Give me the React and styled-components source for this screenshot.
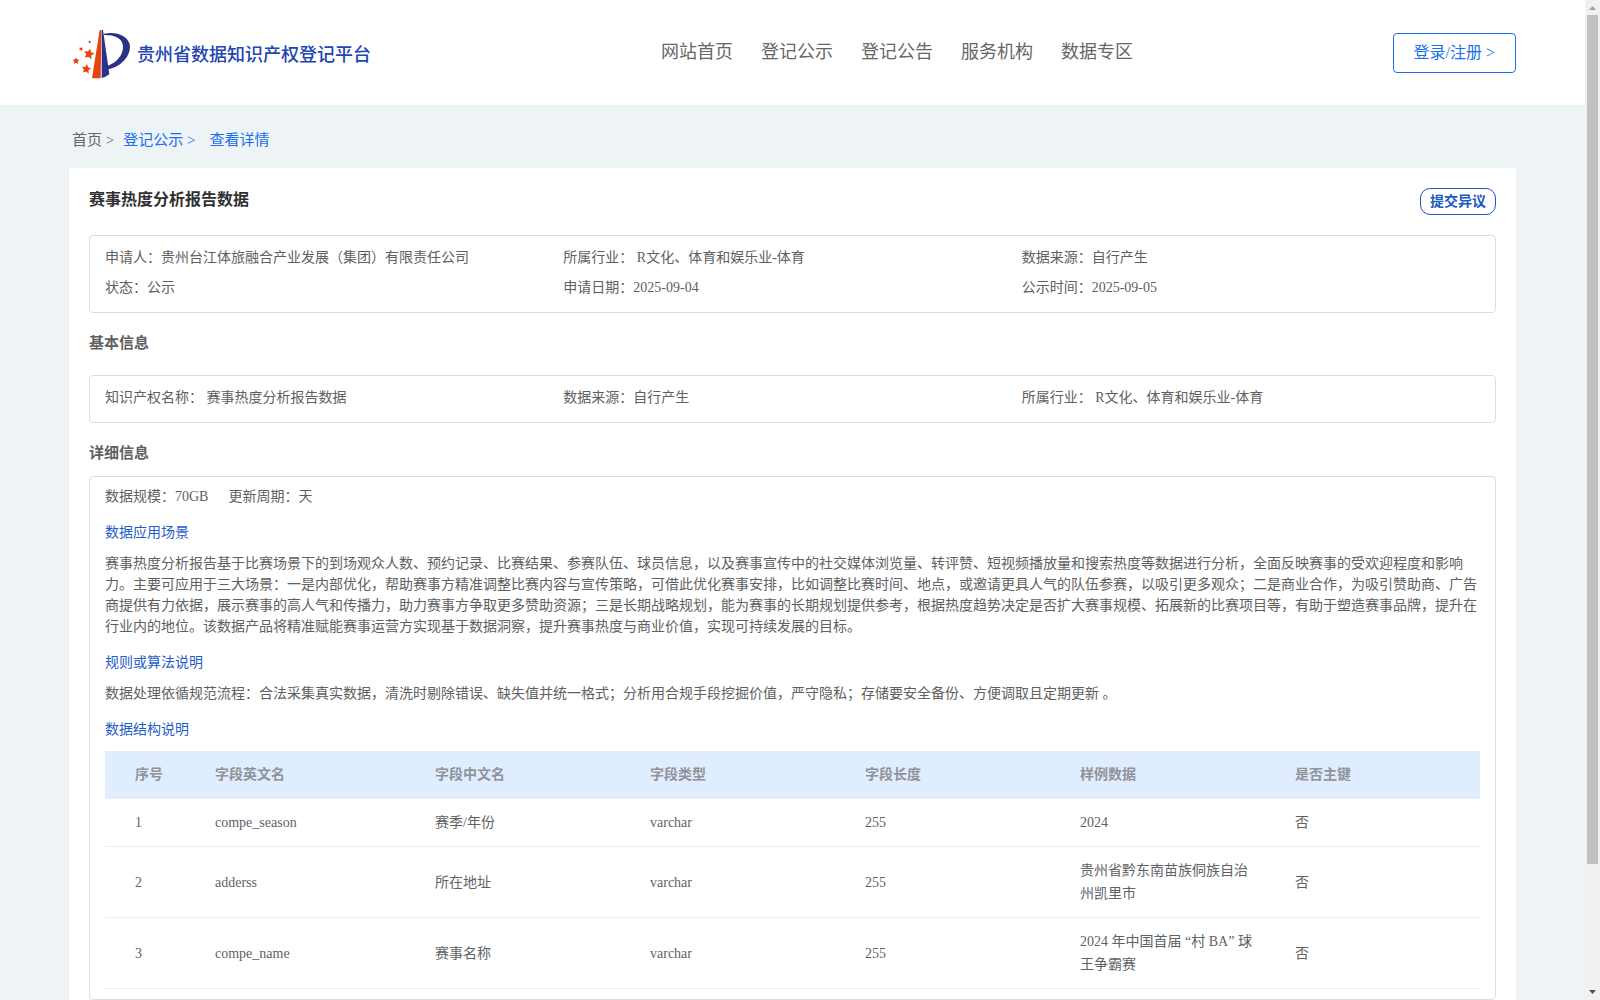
import React from "react";
import styled, { createGlobalStyle } from "styled-components";

const navs = ["网站首页", "登记公示", "登记公告", "服务机构", "数据专区"];

const summary = [
  ["申请人：", "贵州台江体旅融合产业发展（集团）有限责任公司"],
  ["所属行业：", " R文化、体育和娱乐业-体育"],
  ["数据来源：", "自行产生"],
  ["状态：", "公示"],
  ["申请日期：", "2025-09-04"],
  ["公示时间：", "2025-09-05"],
];

const basic = [
  ["知识产权名称：", " 赛事热度分析报告数据"],
  ["数据来源：", "自行产生"],
  ["所属行业：", " R文化、体育和娱乐业-体育"],
];

const columns = ["序号", "字段英文名", "字段中文名", "字段类型", "字段长度", "样例数据", "是否主键"];

const rows = [
  ["1", "compe_season", "赛季/年份", "varchar", "255", "2024", "否"],
  ["2", "adderss", "所在地址", "varchar", "255", "贵州省黔东南苗族侗族自治州凯里市", "否"],
  ["3", "compe_name", "赛事名称", "varchar", "255", "2024 年中国首届 “村 BA” 球王争霸赛", "否"],
];

const Logo = () => {
  return (
    <LogoSvg viewBox="15 12 180 156">
      <g fill="#e8430f">
        <path d="M101 21 L106 21 L104 166 L78 166 Z" />
        <Star x={69} y={93} r={17} turn={12} />
        <Star x={30} y={114} r={11} turn={0} />
        <Star x={61} y={138} r={15} turn={8} />
        <Star x={45} y={78} r={7} turn={20} />
        <Star x={71} y={57} r={5} turn={0} />
      </g>
      <g fill="#2a3188">
        <path d="M107 21 L111 21 L130 154 Q120 162 107 165 Z" />
        <path d="M114 32 C150 24 190 38 192 70 C192 104 162 132 127 139 L124 129 C152 118 171 97 171 71 C171 44 142 35 114 36 Z" />
      </g>
    </LogoSvg>
  );
};

const Star = ({ x, y, r, turn }) => {
  const points = [];
  for (let i = 0; i < 10; i++) {
    const len = i % 2 ? r * 0.48 : r;
    const a = ((i * 36 - 90 + turn) * Math.PI) / 180;
    points.push(`${x + len * Math.cos(a)},${y + len * Math.sin(a)}`);
  }
  return <polygon points={points.join(" ")} />;
};

const InfoGrid = ({ items }) => {
  return (
    <Grid>
      {items.map(([label, value], i) => (
        <Item key={i}>
          {label}
          {value}
        </Item>
      ))}
    </Grid>
  );
};

const App = () => {
  return (
    <>
      <GlobalStyle />
      <Window>
        <Page>
          <Header>
            <Brand>
              <Logo />
              <BrandName>贵州省数据知识产权登记平台</BrandName>
            </Brand>
            <Nav>
              {navs.map((n) => (
                <NavItem key={n}>{n}</NavItem>
              ))}
            </Nav>
            <LoginBtn>登录/注册 &gt;</LoginBtn>
          </Header>
          <Crumbs>
            <Crumb>首页 &gt;</Crumb>
            <Crumb $active $gap="9px">登记公示 &gt;</Crumb>
            <Crumb $active $gap="14px">查看详情</Crumb>
          </Crumbs>
          <Card>
            <TitleRow>
              <Title>赛事热度分析报告数据</Title>
              <ObjectBtn>提交异议</ObjectBtn>
            </TitleRow>
            <Box $height="78px" $top="7px">
              <InfoGrid items={summary} />
            </Box>
            <SubTitle $height="62px">基本信息</SubTitle>
            <Box $height="48px" $top="7px">
              <InfoGrid items={basic} />
            </Box>
            <SubTitle $height="53px">详细信息</SubTitle>
            <Box $height="524px" $top="9px">
              <Scale>
                <span>数据规模：70GB</span>
                <span>更新周期：天</span>
              </Scale>
              <BlueTitle>数据应用场景</BlueTitle>
              <Text>
                赛事热度分析报告基于比赛场景下的到场观众人数、预约记录、比赛结果、参赛队伍、球员信息，以及赛事宣传中的社交媒体浏览量、转评赞、短视频播放量和搜索热度等数据进行分析，全面反映赛事的受欢迎程度和影响力。主要可应用于三大场景：一是内部优化，帮助赛事方精准调整比赛内容与宣传策略，可借此优化赛事安排，比如调整比赛时间、地点，或邀请更具人气的队伍参赛，以吸引更多观众；二是商业合作，为吸引赞助商、广告商提供有力依据，展示赛事的高人气和传播力，助力赛事方争取更多赞助资源；三是长期战略规划，能为赛事的长期规划提供参考，根据热度趋势决定是否扩大赛事规模、拓展新的比赛项目等，有助于塑造赛事品牌，提升在行业内的地位。该数据产品将精准赋能赛事运营方实现基于数据洞察，提升赛事热度与商业价值，实现可持续发展的目标。
              </Text>
              <BlueTitle $top="16px">规则或算法说明</BlueTitle>
              <Text>
                数据处理依循规范流程：合法采集真实数据，清洗时剔除错误、缺失值并统一格式；分析用合规手段挖掘价值，严守隐私；存储要安全备份、方便调取且定期更新 。
              </Text>
              <BlueTitle $top="16px">数据结构说明</BlueTitle>
              <Table>
                <HeadRow>
                  {columns.map((c) => (
                    <Cell key={c}>{c}</Cell>
                  ))}
                </HeadRow>
                {rows.map((row) => (
                  <Row key={row[0]}>
                    {row.map((v, i) => (
                      <Cell key={i}>{v}</Cell>
                    ))}
                  </Row>
                ))}
              </Table>
            </Box>
          </Card>
        </Page>
        <ScrollBar>
          <Arrow viewBox="0 0 15 15" fill="#a3a3a3">
            <path d="M4 10 L11 10 L7.5 6 Z" />
          </Arrow>
          <Thumb />
          <Arrow viewBox="0 0 15 15" fill="#505050">
            <path d="M4 5 L11 5 L7.5 9 Z" />
          </Arrow>
        </ScrollBar>
      </Window>
    </>
  );
};

const GlobalStyle = createGlobalStyle`
  * {
    box-sizing: border-box;
  }
  body {
    margin: 0;
    overflow: hidden;
    font-family: "Liberation Serif", "Noto Sans CJK SC", serif;
    font-size: 14px;
    color: #606060;
  }
`;

const Window = styled.div`
  display: flex;
  width: 1600px;
  height: 1000px;
  overflow: hidden;
`;

const Page = styled.div`
  width: 1585px;
  height: 1000px;
  overflow: hidden;
  background-color: #eef3f6;
`;

const Header = styled.div`
  display: flex;
  justify-content: space-between;
  align-items: center;
  height: 105px;
  padding: 0 69px 0 71px;
  background-color: white;
`;

const Brand = styled.div`
  display: flex;
  align-items: center;
  width: 590px;
`;

const LogoSvg = styled.svg`
  width: 60px;
  height: 52px;
`;

const BrandName = styled.div`
  margin-left: 6px;
  padding-top: 4px;
  font-size: 18px;
  line-height: 24px;
  font-weight: 500;
  color: #2244b4;
`;

const Nav = styled.div`
  display: flex;
  flex: 1;
  gap: 28px;
`;

const NavItem = styled.div`
  font-size: 18px;
  line-height: 24px;
  padding-bottom: 2px;
  color: #666;
`;

const LoginBtn = styled.div`
  height: 40px;
  padding: 0 20px;
  border: 1px solid #1a6ff0;
  border-radius: 4px;
  font-size: 16px;
  line-height: 38px;
  color: #1a6ff0;
`;

const Crumbs = styled.div`
  display: flex;
  align-items: center;
  height: 63px;
  padding: 7px 0 0 72px;
`;

const Crumb = styled.div`
  margin-left: ${(props) => props.$gap || 0};
  font-size: 15px;
  line-height: 20px;
  color: ${(props) => (props.$active ? "#1a6ff0" : "#666")};
`;

const Card = styled.div`
  width: 1447px;
  margin-left: 69px;
  padding: 0 20px;
  background-color: white;
`;

const TitleRow = styled.div`
  display: flex;
  justify-content: space-between;
  height: 67px;
  padding-top: 20px;
`;

const Title = styled.div`
  font-size: 16px;
  font-weight: bold;
  line-height: 24px;
  color: #303030;
`;

const ObjectBtn = styled.div`
  width: 76px;
  height: 27px;
  border: 1px solid #1959c2;
  border-radius: 10px;
  font-weight: bold;
  line-height: 25px;
  text-align: center;
  color: #1959c2;
`;

const Box = styled.div`
  height: ${(props) => props.$height};
  padding: ${(props) => props.$top} 15px 0;
  border: 1px solid #dcdddf;
  border-radius: 4px;
`;

const SubTitle = styled.div`
  height: ${(props) => props.$height};
  padding-top: 20px;
  font-size: 15px;
  font-weight: bold;
  line-height: 21px;
`;

const Grid = styled.div`
  display: grid;
  grid-template-columns: repeat(3, 1fr);
`;

const Item = styled.div`
  line-height: 30px;
  white-space: pre;
`;

const Scale = styled.div`
  display: flex;
  gap: 20px;
  line-height: 22px;
`;

const BlueTitle = styled.div`
  margin: ${(props) => props.$top || "15px"} 0 10px;
  line-height: 20px;
  color: #1f5dc8;
`;

const Text = styled.div`
  line-height: 21px;
`;

const Table = styled.div`
  width: 1375px;
  margin-top: 11px;
`;

const Row = styled.div`
  display: grid;
  grid-template-columns: 80px 220px 215px 215px 215px 215px 185px;
  align-items: center;
  padding: 12px 0 12px 30px;
  border-bottom: 1px solid #ebeef5;
  line-height: 23px;
  color: #606266;
`;

const HeadRow = styled(Row)`
  background-color: #e0edff;
  font-weight: bold;
  color: #909399;
`;

const Cell = styled.div`
  padding-right: 40px;
`;

const ScrollBar = styled.div`
  display: flex;
  flex-direction: column;
  width: 15px;
  height: 1000px;
  background-color: #f1f1f1;
`;

const Arrow = styled.svg`
  width: 15px;
  height: 15px;
`;

const Thumb = styled.div`
  width: 11px;
  height: 849px;
  margin: 0 2px auto;
  background-color: #c1c1c1;
`;

export default App;
